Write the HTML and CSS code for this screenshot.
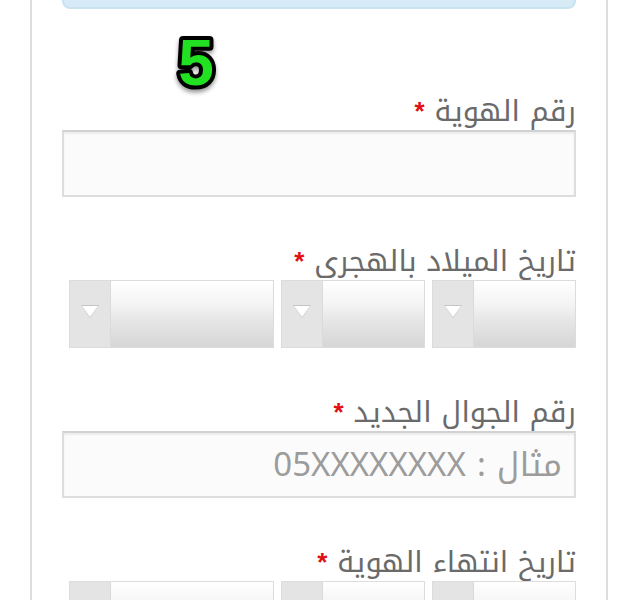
FILE: index.html
```html
<!DOCTYPE html>
<html lang="ar">
<head>
    <meta charset="UTF-8">
    <meta name="viewport" content="width=device-width, initial-scale=1.0">
    <title>تحديث رقم الجوال</title>
    <link rel="stylesheet" href="styles.css">
</head>
<body>
    <div class="card">
        <div class="notice"></div>
        <div class="step">
            <svg class="step-svg" width="70" height="60" viewBox="0 0 70 60">
                <text x="35" y="52" text-anchor="middle" class="step-num">5</text>
            </svg>
        </div>
        <form class="form" dir="rtl">
            <div class="field">
                <label class="label">رقم الهوية <span class="req">*</span></label>
                <input type="text" class="input">
            </div>
            <div class="field">
                <label class="label">تاريخ الميلاد بالهجرى <span class="req">*</span></label>
                <div class="selects">
                    <div class="select small"><span class="arrow"></span></div>
                    <div class="select small"><span class="arrow"></span></div>
                    <div class="select wide"><span class="arrow"></span></div>
                </div>
            </div>
            <div class="field">
                <label class="label">رقم الجوال الجديد <span class="req">*</span></label>
                <input type="text" class="input" placeholder="مثال : 05XXXXXXXX">
            </div>
            <div class="field">
                <label class="label">تاريخ انتهاء الهوية <span class="req">*</span></label>
                <div class="selects">
                    <div class="select small"><span class="arrow"></span></div>
                    <div class="select small"><span class="arrow"></span></div>
                    <div class="select wide"><span class="arrow"></span></div>
                </div>
            </div>
        </form>
    </div>
</body>
</html>
```
FILE: styles.css
```css
body {
    margin: 0;
    background-color: #ffffff;
    font-family: "Noto Kufi Arabic", "Noto Sans Arabic", "DejaVu Sans", sans-serif;
    overflow: hidden;
}
.card {
    margin-left: 30px;
    width: 514px;
    padding: 0 30px;
    border-left: 2px solid #dddddd;
    border-right: 2px solid #dddddd;
    height: 600px;
    overflow: hidden;
}
.notice {
    margin-top: -30px;
    height: 35px;
    background-color: #d6ebf5;
    border: 2px solid #c9e3f0;
    border-radius: 8px;
}
.step {
    height: 60px;
    padding: 24px 0 0 99px;
}
.step-svg {
    overflow: visible;
}
.step-num {
    font-family: "Liberation Sans", Arial, sans-serif;
    font-weight: bold;
    font-size: 64px;
    fill: #22e022;
    stroke: #000000;
    stroke-width: 8px;
    stroke-linejoin: round;
    paint-order: stroke fill;
    filter: drop-shadow(0px 3px 2px rgba(0, 0, 0, 0.4));
}
.form {
    display: flex;
    flex-direction: column;
    gap: 46px;
}
.field {
    display: flex;
    flex-direction: column;
}
.label {
    font-size: 29px;
    line-height: 37px;
    height: 37px;
    color: #6a6a6a;
    white-space: nowrap;
}
.req {
    color: #e01010;
    font-size: 26px;
    font-weight: bold;
    font-family: "Liberation Sans", Arial, sans-serif;
    vertical-align: top;
}
.input {
    box-sizing: border-box;
    width: 100%;
    height: 67px;
    border: 2px solid #dddddd;
    border-top-color: #d2d2d2;
    box-shadow: inset 0 2px 2px rgba(0, 0, 0, 0.06);
    background-color: #fbfbfb;
    padding: 0 12px;
    font-family: inherit;
    font-size: 33px;
    color: #555555;
    outline: none;
}
.input::placeholder {
    color: #9c9c9c;
}
.selects {
    display: flex;
    gap: 7px;
}
.select {
    box-sizing: border-box;
    height: 68px;
    border: 1px solid #dcdcdc;
    display: flex;
    flex-direction: row-reverse;
    background: linear-gradient(#ffffff 0%, #f4f4f4 35%, #e6e6e6 60%, #d6d6d6 100%);
}
.select.small {
    width: 144px;
}
.select.wide {
    width: 205px;
}
.arrow {
    width: 40px;
    background-color: #e4e4e4;
    border-right: 1px solid #dadada;
    position: relative;
}
.arrow::before {
    content: "";
    position: absolute;
    left: 11px;
    top: 24px;
    border-left: 9px solid transparent;
    border-right: 9px solid transparent;
    border-top: 13px solid #c4c4c4;
}
.arrow::after {
    content: "";
    position: absolute;
    left: 12px;
    top: 25px;
    border-left: 8px solid transparent;
    border-right: 8px solid transparent;
    border-top: 11px solid #ffffff;
}
```
